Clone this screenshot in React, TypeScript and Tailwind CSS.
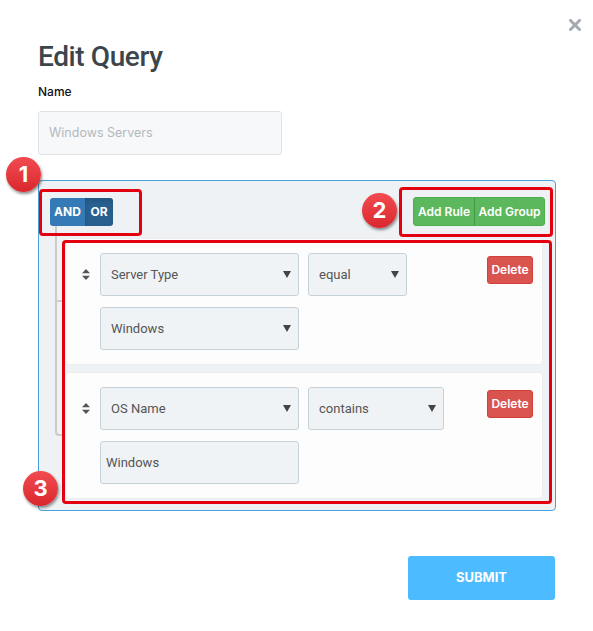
import React from 'react'

type SelectProps = { label: string; width: string }

function FakeSelect({ label, width }: SelectProps) {
  return (
    <div className={`${width} h-[43px] flex items-center justify-between pl-[10px] pr-[7px] bg-[#eff3f6] border border-[#c6d2d9] rounded-[3px] font-['Roboto',sans-serif] text-[13px] text-[#555]`}>
      <span>{label}</span>
      <svg width="8" height="7" viewBox="0 0 8 7">
        <path d="M0 0 L8 0 L4 7 Z" fill="#444" />
      </svg>
    </div>
  )
}

function SortIcon() {
  return (
    <svg width="8" height="11" viewBox="0 0 8 11">
      <path d="M4 0 L8 4.3 L0 4.3 Z" fill="#555" />
      <path d="M4 11 L8 6.7 L0 6.7 Z" fill="#555" />
    </svg>
  )
}

function Marker({ n, className }: { n: string; className: string }) {
  return (
    <div className={`absolute w-[35px] h-[35px] rounded-full bg-gradient-to-b from-[#f24b50] to-[#d9262d] shadow-[1px_2px_3px_rgba(0,0,0,0.45)] flex items-center justify-center text-white text-[22px] font-bold ${className}`}>
      {n}
    </div>
  )
}

function Rule({
  field,
  operator,
  operatorWidth,
  value,
  valueIsInput,
  first,
  last,
}: {
  field: string
  operator: string
  operatorWidth: string
  value: string
  valueIsInput?: boolean
  first?: boolean
  last?: boolean
}) {
  return (
    <div className="relative flex bg-[#fdfdfd] border border-[#ebedef] rounded-[4px] pt-[14px] pb-[14px]">
      {/* tree connectors, like querybuilder's ::before / ::after */}
      <div
        className={`absolute left-[-11px] w-[10px] border-l-2 border-b-2 border-[#cccccc] ${first ? 'top-[-13px] h-[calc(50%+13px)]' : 'top-[-8px] h-[calc(50%+8px)]'} ${last ? 'rounded-bl-[4px]' : ''}`}
      />
      {!last && <div className="absolute left-[-11px] top-1/2 h-[calc(50%+8px)] border-l-2 border-[#cccccc]" />}

      <div className="w-[34px] flex justify-center pl-[6px] pt-[16px]">
        <SortIcon />
      </div>
      <div className="flex-1 flex flex-col gap-[11px]">
        <div className="flex items-start">
          <FakeSelect label={field} width="w-[199px]" />
          <div className="ml-[9px]">
            <FakeSelect label={operator} width={operatorWidth} />
          </div>
          <button className="ml-auto mr-[9px] mt-[3px] w-[46px] h-[28px] rounded-[3px] bg-[#d9534f] border border-[#d43f3a] text-white text-[12px] font-semibold">
            Delete
          </button>
        </div>
        {valueIsInput ? (
          <div className="w-[199px] h-[43px] flex items-center pl-[5px] bg-[#eff3f6] border border-[#c6d2d9] rounded-[3px] font-['Roboto',sans-serif] text-[13px] text-[#555]">
            {value}
          </div>
        ) : (
          <FakeSelect label={value} width="w-[199px]" />
        )}
      </div>
    </div>
  )
}

export default function App() {
  return (
    <div className="relative w-[593px] h-[631px] bg-white font-['Inter',sans-serif]">
      <button className="absolute left-[568px] top-[18px] w-[14px] h-[14px] flex items-center justify-center">
        <svg width="12" height="12" viewBox="0 0 12 12">
          <path d="M1.5 1.5 L10.5 10.5 M10.5 1.5 L1.5 10.5" stroke="#a3abb1" strokeWidth="3" strokeLinecap="round" />
        </svg>
      </button>

      <div className="pl-[38px] pt-[40px]">
        <h1 className="font-['Roboto',sans-serif] text-[28px] leading-[34px] font-medium text-[#3c454c] tracking-[-0.4px]">Edit Query</h1>
        <p className="mt-[10px] text-[12px] leading-[16px] font-medium text-[#111]">Name</p>
        <div className="mt-[11px] w-[244px] h-[44px] flex items-center pl-[10px] bg-[#f6f8fa] border border-[#dfe3e6] rounded-[3px] text-[12.5px] text-[#b3b8bc]">
          Windows Servers
        </div>

        <div className="mt-[25px] w-[518px] border border-[#4aa0dc] rounded-[4px] bg-[#eff2f5] pt-[16px] pl-[11px] pr-[10px] pb-[11px]">
          <div className="flex items-center justify-between">
            <div className="flex h-[28px] rounded-[3px] overflow-hidden text-[12px] font-bold text-white">
              <span className="w-[35px] flex items-center justify-center bg-[#337ab7]">AND</span>
              <span className="w-[28px] flex items-center justify-center bg-[#286090] shadow-[inset_0_2px_4px_rgba(0,0,0,0.15)]">OR</span>
            </div>
            <div className="flex h-[29px] rounded-[3px] overflow-hidden border border-[#4cae4c] text-[12px] font-semibold text-white bg-[#5cb85c]">
              <span className="w-[61px] flex items-center justify-center border-r border-[#419641]">Add Rule</span>
              <span className="w-[69px] flex items-center justify-center">Add Group</span>
            </div>
          </div>

          <div className="mt-[12px] ml-[15px] mr-[2px] flex flex-col gap-[7px]">
            <Rule field="Server Type" operator="equal" operatorWidth="w-[99px]" value="Windows" first />
            <Rule field="OS Name" operator="contains" operatorWidth="w-[136px]" value="Windows" valueIsInput last />
          </div>
        </div>

        <div className="w-[517px] flex justify-end mt-[45px]">
          <button className="w-[147px] h-[44px] rounded-[3px] bg-[#4dbbff] text-white text-[13px] font-bold">
            SUBMIT
          </button>
        </div>
      </div>

      {/* annotations laid over the screenshot */}
      <div className="absolute left-[39px] top-[189px] w-[103px] h-[47px] border-[3px] border-[#e3000f] rounded-[4px]" />
      <div className="absolute left-[399px] top-[187px] w-[154px] h-[50px] border-[3px] border-[#e3000f] rounded-[4px]" />
      <div className="absolute left-[62px] top-[240px] w-[490px] h-[264px] border-[3px] border-[#e3000f] rounded-[4px]" />
      <Marker n="1" className="left-[6px] top-[157px]" />
      <Marker n="2" className="left-[362px] top-[193px]" />
      <Marker n="3" className="left-[23px] top-[471px]" />
    </div>
  )
}
